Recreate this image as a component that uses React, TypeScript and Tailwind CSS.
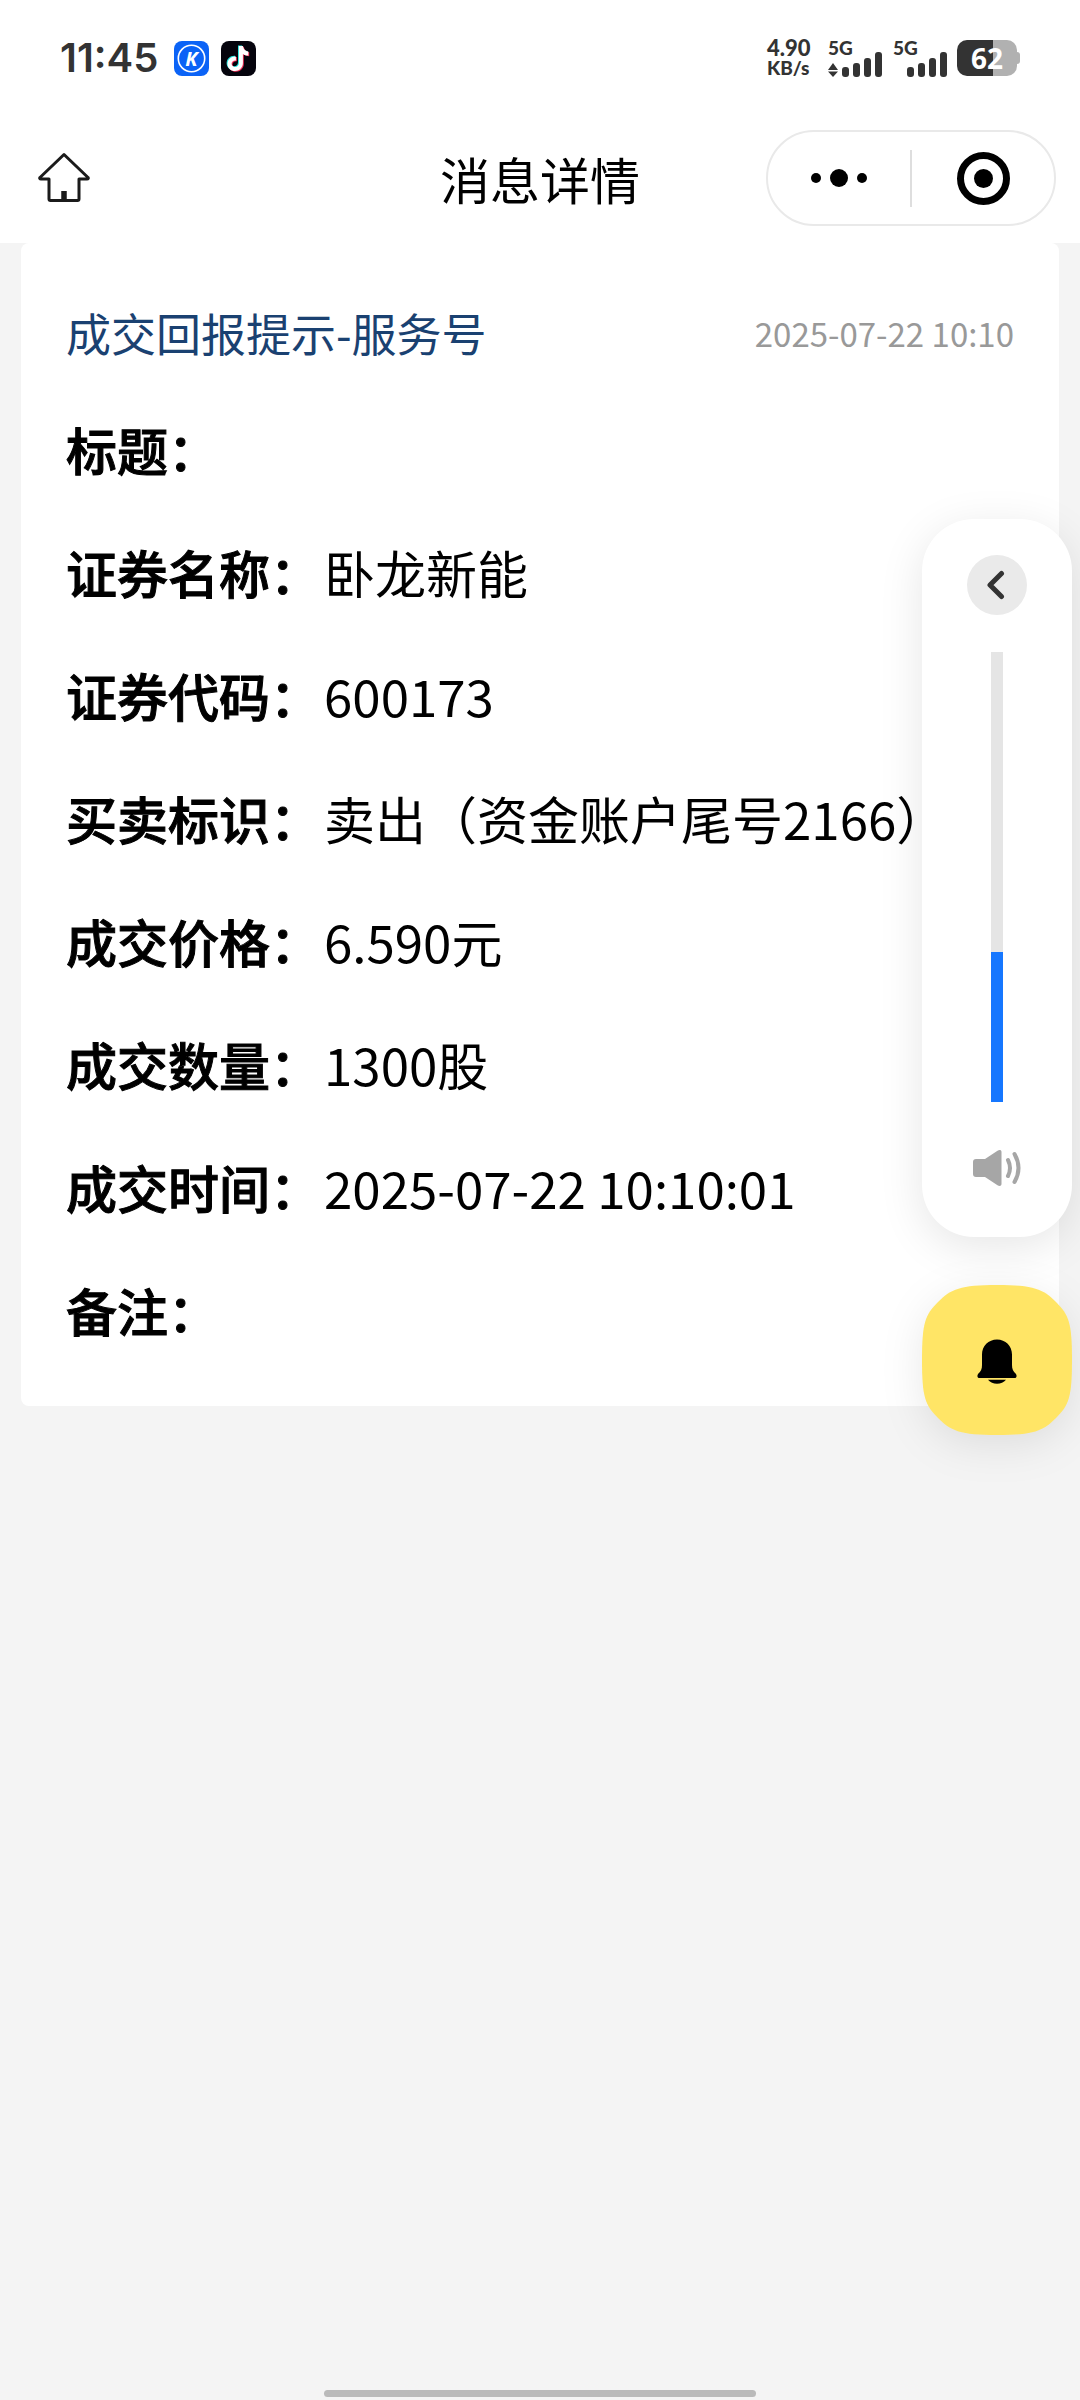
import { useState } from "react";

const fields = [
  { label: "标题", value: "" },
  { label: "证券名称", value: "卧龙新能" },
  { label: "证券代码", value: "600173" },
  { label: "买卖标识", value: "卖出（资金账户尾号2166）" },
  { label: "成交价格", value: "6.590元" },
  { label: "成交数量", value: "1300股" },
  { label: "成交时间", value: "2025-07-22 10:10:01" },
  { label: "备注", value: "" },
];

function KAppIcon() {
  return (
    <svg viewBox="0 0 35 35" className="size-[35px]" aria-hidden="true">
      <rect width="35" height="35" rx="8" fill="#0b63f6" />
      <circle cx="17.5" cy="17.5" r="13.2" fill="none" stroke="#fff" strokeWidth="1.6" />
      <text x="17.5" y="25" textAnchor="middle" fill="#fff" className="font-['Open_Sans'] text-[20px] font-bold italic">
        K
      </text>
    </svg>
  );
}

function MusicNoteAppIcon() {
  const note =
    "M17.4 5h4c.3 3 2.4 5.200 5.400 5.500v4c-2 0-3.900-.6-5.400-1.700v9.200c0 4.600-3.700 8-7.900 8s-7.500-3.300-7.500-7.400 3.600-7.600 8.400-7.300v4.200c-2.300-.4-4.300 1.100-4.300 3.100 0 1.900 1.500 3.300 3.400 3.300 2.200 0 3.900-1.600 3.900-4z";
  return (
    <svg viewBox="0 0 35 35" className="size-[35px]" aria-hidden="true">
      <rect width="35" height="35" rx="8" fill="#05040d" />
      <path d={note} fill="#25e4df" transform="translate(-.4 -.6)" />
      <path d={note} fill="#f5325b" transform="translate(1.400 .8)" />
      <path d={note} fill="#fff" transform="translate(.5 .1)" />
    </svg>
  );
}

function Signal({ traffic = false }: { traffic?: boolean }) {
  return (
    <div className="flex h-9 w-[55px] flex-col justify-between">
      <span className="h-4 font-['Lato'] text-[19px] leading-4 font-black">5G</span>
      <svg viewBox="0 0 55 25" className="-mt-1 h-[25px] w-[55px] shrink-0" fill="#333" aria-hidden="true">
        {traffic && <path d="M5 11 10 18H0zM0 19.500h10L5 25z" />}
        <rect x="14" y="15" width="7" height="10" rx="3" />
        <rect x="25" y="11" width="7" height="14" rx="3" />
        <rect x="36" y="6" width="7" height="19" rx="3" />
        <rect x="47" y="0" width="7" height="25" rx="3" />
      </svg>
    </div>
  );
}

function StatusBar() {
  return (
    <div className="flex h-[116px] items-center justify-between px-[60px] text-[#333]">
      <div className="flex items-center">
        <span className="w-[114px] font-['Inter'] text-[40px] leading-10 font-semibold">11:45</span>
        <div className="flex gap-3">
          <KAppIcon />
          <MusicNoteAppIcon />
        </div>
      </div>
      <div className="flex items-center">
        <div className="w-[61px] font-['Lato'] font-black">
          <div className="text-[22px] leading-5">4.90</div>
          <div className="text-[19px] leading-5">KB/s</div>
        </div>
        <div className="flex gap-[10px]">
          <Signal traffic />
          <Signal />
        </div>
        <div className="ml-[9px] flex items-center">
          <div className="flex h-9 w-15 items-center justify-center rounded-[10px] bg-[linear-gradient(to_right,#333_60%,#b1b1b1_60%)] font-['Open_Sans'] text-[28px] leading-9 font-bold text-white">
            62
          </div>
          <div className="h-3 w-[3px] rounded-r-sm bg-[#b1b1b1]" />
        </div>
      </div>
    </div>
  );
}

function NavBar() {
  return (
    <header className="grid h-[127px] grid-cols-[1fr_auto_1fr] items-start px-6">
      <button type="button" aria-label="首页" className="mt-9 ml-[14px] w-[52px]">
        <svg viewBox="0 0 52 52" className="size-[52px]" fill="none" stroke="#1b1b1b" strokeWidth="3" strokeLinejoin="round" strokeLinecap="round">
          <path d="M26 2.500 2 25.500c-.6.800-.3 1.500 1 1.500h8v20c0 1 .5 1.500 1.500 1.500h27c1 0 1.500-.5 1.500-1.500V27h8c1.300 0 1.600-.7 1-1.500z" />
          <path d="M26 39v9" strokeWidth="5.500" strokeLinecap="butt" />
        </svg>
      </button>
      <h1 className="mt-[26px] text-[50px] leading-[72px] font-normal">消息详情</h1>
      <div className="mt-[14px] flex h-24 w-[290px] items-center justify-self-end rounded-full border-2 border-[#e9e9e9]">
        <button type="button" aria-label="更多" className="flex h-full flex-1 items-center justify-center gap-[9px]">
          <span className="size-[10px] rounded-full bg-black" />
          <span className="size-[18px] rounded-full bg-black" />
          <span className="size-[10px] rounded-full bg-black" />
        </button>
        <span className="h-[57px] w-[2px] bg-[#dedede]" />
        <button type="button" aria-label="关闭" className="flex h-full flex-1 items-center justify-center">
          <span className="flex size-[53px] items-center justify-center rounded-full border-[7px] border-black">
            <span className="size-[19px] rounded-full bg-black" />
          </span>
        </button>
      </div>
    </header>
  );
}

function VolumePanel() {
  const [volume, setVolume] = useState(150);
  const filled = (volume / 450) * 100;
  return (
    <aside className="absolute top-[519px] right-2 flex w-[150px] flex-col gap-12">
      <div className="flex flex-col items-center rounded-[52px] bg-white pt-9 pb-[51px] shadow-[0_10px_45px_rgba(0,0,0,0.10)]">
        <button type="button" aria-label="收起" className="flex size-15 items-center justify-center rounded-full bg-[#eaeaea]">
          <svg viewBox="0 0 20 30" className="h-[30px] w-5" fill="none" stroke="#333" strokeWidth="5" strokeLinecap="round" strokeLinejoin="round">
            <path d="M14.500 3.500 3 15l11.500 11.500" />
          </svg>
        </button>
        <input
          type="range"
          aria-label="音量"
          min={0}
          max={450}
          value={volume}
          onChange={(e) => setVolume(Number(e.target.value))}
          className="mt-[37px] h-[450px] w-3 appearance-none [direction:rtl] [writing-mode:vertical-lr] [&::-webkit-slider-thumb]:size-0 [&::-webkit-slider-thumb]:appearance-none"
          style={{ background: `linear-gradient(to top, #1677ff ${filled}%, #e5e5e5 ${filled}%)` }}
        />
        <svg viewBox="0 0 48 36" className="mt-12 h-9 w-12" aria-hidden="true">
          <path d="M3 9h9L24.500.7C26.500-.5 28.500 0 28.500 2v32c0 2-2 2.500-4 1.300L12 27H3c-1.900 0-3-1.100-3-3V12c0-1.900 1.100-3 3-3z" fill="#a6a6a6" />
          <path d="M35 10q4 8 0 16M41.500 4q8 14 0 28" fill="none" stroke="#a6a6a6" strokeWidth="4" strokeLinecap="round" />
        </svg>
      </div>
      <button type="button" aria-label="提醒" className="[filter:drop-shadow(0_10px_20px_rgba(0,0,0,0.09))]">
        <svg viewBox="0 0 150 150" className="w-full">
          <path d="M75 0C112 0 121 4 134 17S150 38 150 75 147 120 134 133 112 150 75 150 29 146 16 133 0 112 0 75 3 30 16 17 38 0 75 0z" fill="#ffe566" />
          <path d="M75 54.500c8.500 0 15 6.500 15 15V80c0 4 1 6 4 9 1.200 2 .5 4-1 4H57c-1.500 0-2.200-2-1-4 3-3 4-5 4-9V69.500c0-8.500 6.500-15 15-15z" />
          <path d="M66 94.800h18q-3.500 4-9 4t-9-4z" />
        </svg>
      </button>
    </aside>
  );
}

export default function App() {
  return (
    <div className="relative flex min-h-screen flex-col bg-[#f4f4f4] font-['Noto_Sans_CJK_SC',sans-serif] text-black">
      <div className="bg-white">
        <StatusBar />
        <NavBar />
      </div>
      <main className="mx-[21px] rounded-lg bg-white px-[45px] pt-14 pb-[34px]">
        <div className="mb-[21px] flex items-center justify-between">
          <h2 className="text-[45px] leading-[68px] font-normal text-[#1a4171]">成交回报提示-服务号</h2>
          <time className="text-[33px] leading-[68px] text-[#999]">2025-07-22 10:10</time>
        </div>
        <dl>
          {fields.map((field) => (
            <div key={field.label} className="flex gap-[3px] text-[51px] leading-[123px] whitespace-nowrap">
              <dt className="font-medium [-webkit-text-stroke:1px_black]">{field.label}：</dt>
              <dd>{field.value}</dd>
            </div>
          ))}
        </dl>
      </main>
      <VolumePanel />
      <div className="mx-auto mt-auto mb-[3px] h-[7px] w-2/5 rounded-full bg-[#bababa]" />
    </div>
  );
}
